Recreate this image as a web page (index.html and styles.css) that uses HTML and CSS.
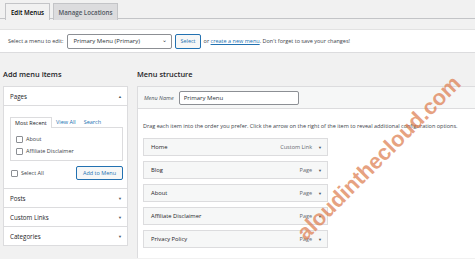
FILE: index.html
```html
<!DOCTYPE html>
<html lang="en">
<head>
    <meta charset="UTF-8">
    <meta name="viewport" content="width=device-width, initial-scale=1.0">
    <title>Menus</title>
    <link rel="stylesheet" href="styles.css">
</head>
<body>
    <!-- Tabs -->
    <div class="nav-tabs">
        <span class="nav-tab active">Edit Menus</span>
        <span class="nav-tab">Manage Locations</span>
    </div>

    <!-- Select a menu bar -->
    <div class="manage-menus">
        <span>Select a menu to edit:</span>
        <span class="select-box">Primary Menu (Primary)<span class="chev">&#8964;</span></span>
        <span class="btn">Select</span>
        <span>or <a href="#">create a new menu</a>. Don't forget to save your changes!</span>
    </div>

    <div class="columns">
        <!-- Add menu items -->
        <div class="col-left">
            <h2>Add menu items</h2>
            <div class="accordion">
                <div class="acc-title open">Pages <span class="arrow">&#9650;</span></div>
                <div class="acc-content">
                    <div class="inner-tabs">
                        <span class="inner-tab active">Most Recent</span>
                        <span class="inner-tab">View All</span>
                        <span class="inner-tab">Search</span>
                    </div>
                    <div class="tab-panel">
                        <label class="check"><span class="box"></span>About</label>
                        <label class="check"><span class="box"></span>Affiliate Disclaimer</label>
                    </div>
                    <div class="add-row">
                        <label class="check"><span class="box"></span>Select All</label>
                        <span class="btn">Add to Menu</span>
                    </div>
                </div>
                <div class="acc-title">Posts <span class="arrow">&#9660;</span></div>
                <div class="acc-title">Custom Links <span class="arrow">&#9660;</span></div>
                <div class="acc-title">Categories <span class="arrow">&#9660;</span></div>
            </div>
        </div>

        <!-- Menu structure -->
        <div class="col-right">
            <h2>Menu structure</h2>
            <div class="menu-box">
                <div class="menu-header">
                    <em>Menu Name</em>
                    <span class="name-input">Primary Menu</span>
                </div>
                <div class="menu-body">
                    <p class="drag-text">Drag each item into the order you prefer. Click the arrow on the right of the item to reveal additional configuration options.</p>
                    <div class="items" id="items"></div>
                </div>
            </div>
        </div>
    </div>

    <div class="watermark">aloudinthecloud.com</div>

    <script>
        // Menu items
        const items = [
            { title: 'Home', type: 'Custom Link' },
            { title: 'Blog', type: 'Page' },
            { title: 'About', type: 'Page' },
            { title: 'Affiliate Disclaimer', type: 'Page' },
            { title: 'Privacy Policy', type: 'Page' }
        ];
        const list = document.getElementById('items');
        items.forEach(item => {
            const div = document.createElement('div');
            div.className = 'menu-item';
            div.innerHTML = `
                <span>${item.title}</span>
                <span class="item-type">${item.type}<span class="arrow">&#9660;</span></span>
            `;
            list.appendChild(div);
        });
    </script>
</body>
</html>
```

FILE: styles.css
```css
html {
    overflow: hidden;
}
body {
    margin: 0;
    background: #f1f1f1;
    font-family: "Open Sans", sans-serif;
    font-size: 5.5px;
    color: #3c434a;
    height: 259px;
    overflow: hidden;
    position: relative;
}
.nav-tabs {
    display: flex;
    gap: 3px;
    padding: 3px 0 0 5px;
    border-bottom: 1px solid #c3c4c7;
    height: 15px;
}
.nav-tab {
    display: flex;
    align-items: center;
    justify-content: center;
    border: 1px solid #c3c4c7;
    border-bottom: none;
    background: #dcdcde;
    font-size: 6.2px;
    font-weight: 600;
    color: #50575e;
    width: 63px;
    height: 16px;
}
.nav-tab.active {
    background: #f1f1f1;
    color: #000;
    width: 43px;
    height: 16px;
    margin-bottom: -1px;
}
.manage-menus {
    margin-top: 10px;
    height: 22px;
    background: #fff;
    border-top: 1px solid #e2e2e2;
    border-bottom: 1px solid #dcdcde;
    display: flex;
    align-items: center;
    gap: 3px;
    padding-left: 8px;
}
.manage-menus a {
    color: #2271b1;
}
.select-box {
    width: 94px;
    height: 13px;
    border: 1px solid #8c8f94;
    border-radius: 2px;
    display: flex;
    align-items: center;
    justify-content: space-between;
    padding: 0 4px 0 5px;
    font-size: 6px;
    color: #2c3338;
    margin-left: 1px;
}
.chev {
    font-size: 6px;
    margin-top: -3px;
}
.btn {
    display: inline-flex;
    align-items: center;
    justify-content: center;
    border: 1px solid #2271b1;
    border-radius: 2px;
    background: #f6f7f7;
    color: #2271b1;
    height: 13px;
    padding: 0 4px;
}
.columns {
    display: flex;
    gap: 9px;
    padding-left: 3px;
    margin-top: 16px;
}
h2 {
    margin: 0 0 6px 0;
    font-size: 7.4px;
    font-weight: 600;
    color: #1d2327;
    height: 11px;
    line-height: 11px;
}
.col-left {
    width: 125px;
}
.accordion {
    background: #fff;
    border: 1px solid #dcdcde;
}
.acc-title {
    height: 18px;
    border-top: 1px solid #dcdcde;
    display: flex;
    align-items: center;
    justify-content: space-between;
    padding: 0 5px 0 6px;
    font-size: 6.2px;
    color: #1d2327;
}
.acc-title:first-child {
    border-top: none;
}
.acc-title .arrow,
.menu-item .arrow {
    font-size: 4px;
    color: #50575e;
}
.acc-content {
    border-top: 1px solid #dcdcde;
    padding: 11px 4px 8px 6px;
}
.inner-tabs {
    display: flex;
    height: 10px;
}
.inner-tab {
    display: flex;
    align-items: center;
    padding: 0 4px;
    color: #2271b1;
}
.inner-tab.active {
    border: 1px solid #dcdcde;
    border-bottom: none;
    color: #1d2327;
    background: #fff;
    width: 32px;
    margin-bottom: -1px;
    position: relative;
}
.tab-panel {
    border: 1px solid #dcdcde;
    height: 34px;
    padding: 7px 5px 0 5px;
    box-sizing: border-box;
    display: flex;
    flex-direction: column;
    gap: 4px;
}
.check {
    display: flex;
    align-items: center;
    gap: 3px;
}
.box {
    width: 5px;
    height: 5px;
    border: 1px solid #8c8f94;
    border-radius: 1px;
    background: #fff;
}
.add-row {
    display: flex;
    justify-content: space-between;
    align-items: center;
    margin-top: 5px;
    padding-left: 1px;
}
.add-row .btn {
    width: 37px;
    height: 12px;
}
.col-right {
    flex: 1;
}
.menu-box {
    background: #fff;
    border: 1px solid #dcdcde;
    border-right: none;
    border-bottom: none;
    height: 171px;
}
.menu-header {
    background: #f6f7f7;
    border-bottom: 1px solid #dcdcde;
    height: 21px;
    display: flex;
    align-items: center;
    gap: 5px;
    padding-left: 6px;
}
.menu-header em {
    color: #50575e;
}
.name-input {
    width: 114px;
    height: 12px;
    border: 1px solid #8c8f94;
    border-radius: 2px;
    background: #fff;
    display: flex;
    align-items: center;
    padding-left: 4px;
    font-size: 6px;
    color: #2c3338;
}
.menu-body {
    padding: 0 0 0 5px;
}
.drag-text {
    margin: 13px 0 8px 0;
    line-height: 8px;
}
.items {
    display: flex;
    flex-direction: column;
    gap: 5px;
}
.menu-item {
    width: 185px;
    height: 18px;
    box-sizing: border-box;
    border: 1px solid #dcdcde;
    background: #f6f7f7;
    display: flex;
    align-items: center;
    justify-content: space-between;
    padding: 0 5px 0 7px;
    color: #1d2327;
    font-size: 5.8px;
}
.item-type {
    display: flex;
    align-items: center;
    gap: 6px;
    color: #646970;
    font-size: 5.5px;
}
.watermark {
    position: absolute;
    left: 379px;
    top: 158px;
    transform: translate(-50%, -50%) rotate(-45deg);
    font-family: "Liberation Sans", Arial, sans-serif;
    font-weight: bold;
    font-size: 22px;
    color: rgba(220, 120, 72, 0.7);
    white-space: nowrap;
}
```
